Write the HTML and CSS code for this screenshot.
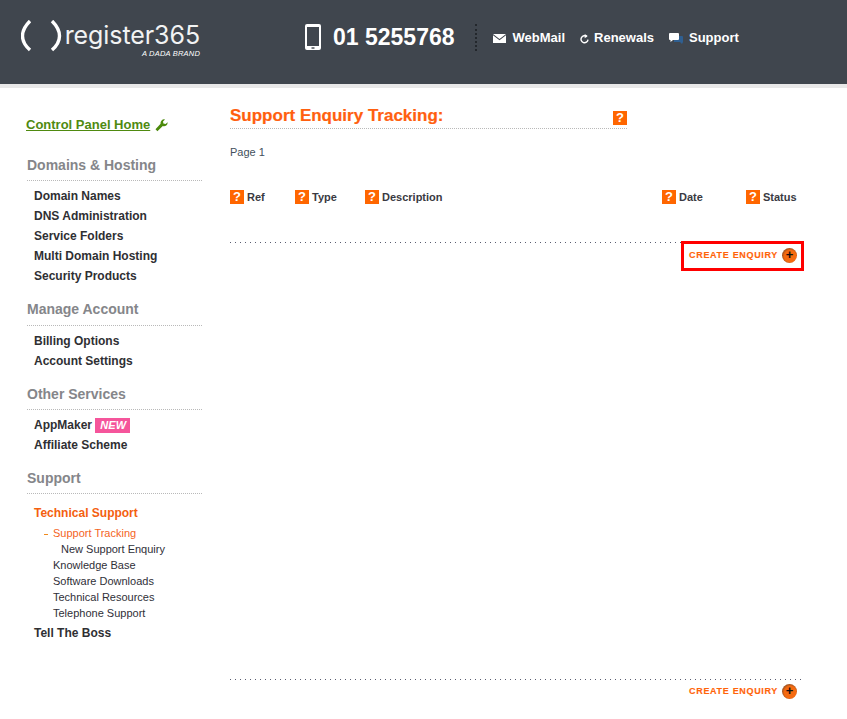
FILE: index.html
```html
<!DOCTYPE html>
<html lang="en">
<head>
<meta charset="utf-8">
<title>Support Enquiry Tracking</title>
<link rel="stylesheet" href="styles.css">
</head>
<body>
<header class="topbar">
  <a class="logo">
    <svg class="logo-brackets" width="42" height="32" viewBox="0 0 42 32"><path d="M9 1C-1 11-1 21 9 30M31 1C41 11 41 21 31 30" fill="none" stroke="#fff" stroke-width="3.400"/></svg>
    <span class="logo-text"><span class="logo-name">register365</span><span class="logo-sub">A DADA BRAND</span></span>
  </a>
  <div class="phone">
    <svg width="16" height="26" viewBox="0 0 16 26"><path fill-rule="evenodd" d="M2 0h12a2 2 0 0 1 2 2v22a2 2 0 0 1-2 2H2a2 2 0 0 1-2-2V2a2 2 0 0 1 2-2zM2 3v19h12V3z" fill="#fff"/><rect x="6.500" y="23.300" width="3" height="1.400" fill="#40464e"/></svg>
    <span class="phone-num">01 5255768</span>
  </div>
  <nav class="toplinks">
    <a class="toplink toplink-mail"><svg width="13" height="9" viewBox="0 0 13 9"><path d="M0 0h13L6.500 5z" fill="#fff"/><path d="M0 1.300V9h13V1.300L6.500 6.300z" fill="#fff"/></svg>WebMail</a>
    <a class="toplink toplink-renew"><svg width="9" height="10" viewBox="0 0 9 10"><path d="M6.800 2.600A3.500 3.500 0 1 0 8 5.600" fill="none" stroke="#fff" stroke-width="1.400"/><path d="M4.700 0v4.300l3-2.400z" fill="#fff"/></svg>Renewals</a>
    <a class="toplink toplink-support"><svg width="14" height="11" viewBox="0 0 14 11"><path d="M5 3h8a1 1 0 0 1 1 1v5l-1 2-2-2H5z" fill="#2f5f91"/><path d="M1 0h8a1 1 0 0 1 1 1v5a1 1 0 0 1-1 1H4L1.500 9V7H1a1 1 0 0 1-1-1V1a1 1 0 0 1 1-1z" fill="#fff"/></svg>Support</a>
  </nav>
</header>
<div class="strip"></div>
<div class="page">
  <aside class="side">
    <div class="home-row">
      <a class="home">Control Panel Home</a>
      <svg width="13" height="13" viewBox="0 0 13 13"><path d="M12.600 3.200 10.600 5 8.400 4.400 8 2.400 10 .5A3.600 3.600 0 0 0 5.600 4.800L.5 10.200 2.400 12.200 7.800 7A3.600 3.600 0 0 0 12.600 3.200z" fill="#4c8a0c"/></svg>
    </div>
    <h2 class="side-head">Domains &amp; Hosting</h2>
    <ul class="menu">
      <li>Domain Names</li>
      <li>DNS Administration</li>
      <li>Service Folders</li>
      <li>Multi Domain Hosting</li>
      <li>Security Products</li>
    </ul>
    <h2 class="side-head side-head-account">Manage Account</h2>
    <ul class="menu">
      <li>Billing Options</li>
      <li>Account Settings</li>
    </ul>
    <h2 class="side-head side-head-other">Other Services</h2>
    <ul class="menu">
      <li>AppMaker <span class="badge">NEW</span></li>
      <li>Affiliate Scheme</li>
    </ul>
    <h2 class="side-head side-head-support">Support</h2>
    <ul class="menu menu-support">
      <li class="active">Technical Support</li>
    </ul>
    <ul class="submenu">
      <li class="current">Support Tracking</li>
      <li class="deep">New Support Enquiry</li>
      <li>Knowledge Base</li>
      <li>Software Downloads</li>
      <li>Technical Resources</li>
      <li>Telephone Support</li>
    </ul>
    <ul class="menu menu-last">
      <li>Tell The Boss</li>
    </ul>
  </aside>
  <main class="main">
    <div class="title-row">
      <h1 class="title">Support Enquiry Tracking:</h1>
      <span class="help help-title">?</span>
    </div>
    <p class="pager">Page 1</p>
    <div class="cols">
      <span class="col col-ref"><span class="help">?</span>Ref</span>
      <span class="col col-type"><span class="help">?</span>Type</span>
      <span class="col col-desc"><span class="help">?</span>Description</span>
      <span class="col col-date"><span class="help">?</span>Date</span>
      <span class="col col-status"><span class="help">?</span>Status</span>
    </div>
    <div class="rule rule-top"></div>
    <div class="action-row action-row-top">
      <a class="create create-outlined">CREATE ENQUIRY<span class="plus">+</span></a>
    </div>
    <div class="rule rule-bottom"></div>
    <div class="action-row">
      <a class="create">CREATE ENQUIRY<span class="plus">+</span></a>
    </div>
  </main>
</div>
</body>
</html>
```
FILE: styles.css
```css
* { box-sizing: border-box; }
html, body { margin: 0; padding: 0; }
body { background: #fff; font-family: "Liberation Sans", Arial, sans-serif; color: #2f2f33; height: 719px; overflow: hidden; }
ul { list-style: none; margin: 0; padding: 0; }
h1, h2, p { margin: 0; }

.topbar { height: 84px; background: #40464e; display: flex; align-items: flex-start; color: #fff; }
.logo { display: flex; margin: 20px 0 0 21px; width: 179px; }
.logo-brackets { flex: none; margin-right: 2px; }
.logo-text { display: flex; flex-direction: column; align-items: flex-end; width: 135px; }
.logo-name { font-family: Inter, sans-serif; font-weight: 400; font-size: 25px; line-height: 30px; letter-spacing: -.08px; color: #f2f3f3; white-space: nowrap; }
.logo-sub { font-size: 7.500px; font-style: italic; font-weight: 400; line-height: 8px; margin-top: 0; letter-spacing: .2px; white-space: nowrap; }
.phone { display: flex; align-items: center; margin: 24px 0 0 105px; gap: 12px; }
.phone-num { font-size: 23px; font-weight: 700; line-height: 26px; white-space: nowrap; }
.toplinks { display: flex; margin: 24px 0 0 20px; height: 27px; padding-left: 16px; border-left: 2px dotted #23272c; gap: 15px; align-items: flex-start; }
.toplink { display: flex; align-items: center; font-size: 13px; font-weight: 700; line-height: 16px; margin-top: 6px; color: #fff; }
.toplink-mail svg { margin-right: 7px; margin-top: 1px; }
.toplink-renew svg { margin-right: 5px; margin-top: 1px; }
.toplink-support svg { margin-right: 6px; margin-top: 1px; }

.strip { height: 4px; background: #e8e8e8; }

.page { display: flex; align-items: flex-start; }
.side { width: 175px; margin: 28px 0 0 27px; flex: none; }
.home-row { display: flex; align-items: center; margin-left: -1px; height: 18px; gap: 5px; }
.home { font-size: 13px; font-weight: 700; color: #4f8a10; text-decoration: underline; line-height: 16px; }
.side-head { font-size: 14px; font-weight: 700; color: #85868a; line-height: 18px; padding-bottom: 6px; border-bottom: 1px dotted #b9b9b9; }
.home-row + .side-head { margin-top: 22px; }
.menu { margin-top: 5px; }
.menu li { font-size: 12px; font-weight: 700; line-height: 20px; padding-left: 7px; height: 20px; color: #2f2f33; }
.menu + .side-head-account { margin-top: 14px; padding-bottom: 7px; }
.menu + .side-head-other { margin-top: 14px; }
.menu + .side-head-support { margin-top: 14px; }
.menu-support { margin-top: 9px; }
.menu li.active { color: #f4600f; }
.badge { display: inline-block; background: #f5559b; color: #fff; font-size: 11px; font-style: italic; font-weight: 700; line-height: 15px; height: 15px; padding: 0 4px 0 5px; margin-left: 0; vertical-align: 0; }
.submenu { margin-top: 2px; }
.submenu li { font-size: 11px; line-height: 16px; height: 16px; padding-left: 26px; color: #2f2f38; }
.submenu li.current { color: #f4641e; position: relative; }
.submenu li.current::before { content: ""; position: absolute; left: 17px; top: 9px; width: 4px; height: 1px; background: #f08a1c; }
.submenu li.deep { padding-left: 34px; }
.menu-last { margin-top: 2px; }

.main { margin: 16px 0 0 28px; width: 574px; flex: none; }
.title-row { position: relative; height: 25px; border-bottom: 1px dotted #b9b9b9; width: 397px; }
.title { font-size: 17px; font-weight: 700; color: #ff5f0f; line-height: 24px; white-space: nowrap; -webkit-text-stroke: .2px #ff5f0f; }
.help { display: inline-block; width: 14px; height: 14px; background: #ff6600; color: #fff; font-size: 13px; font-weight: 700; line-height: 14px; text-align: center; flex: none; }
.help-title { position: absolute; left: 383px; top: 7px; }
.pager { font-size: 11px; line-height: 14px; color: #42505c; margin-top: 16px; }
.cols { position: relative; height: 14px; margin-top: 31px; }
.col { position: absolute; top: 0; display: flex; align-items: center; gap: 3px; font-size: 11px; font-weight: 700; line-height: 14px; color: #3a3a42; white-space: nowrap; }
.col-ref { left: 0; }
.col-type { left: 65px; }
.col-desc { left: 135px; }
.col-date { left: 432px; }
.col-status { left: 516px; }
.rule { height: 1px; width: 574px; background: repeating-linear-gradient(to right, #5a5d70 0, #5a5d70 1px, transparent 1px, transparent 5px); }
.rule-top { margin-top: 38px; }
.rule-bottom { margin-top: 408px; }
.action-row { display: flex; justify-content: flex-end; width: 574px; }
.action-row-top { margin-top: -2px; }
.create { display: flex; align-items: center; font-size: 9px; font-weight: 700; letter-spacing: .67px; color: #ff640a; height: 16px; margin: 3px 7px 0 0; gap: 4px; white-space: nowrap; -webkit-text-stroke: .15px #ff640a; }
.create-outlined { height: 30px; margin: 0; padding: 0 4px 2px 5px; border: 3px solid #f00; background: #fff; }
.plus { display: block; width: 15px; height: 15px; border-radius: 50%; background: radial-gradient(circle at 55% 55%, #f56a10 50%, #a8551f 68%, #4e4a48 100%); color: #111; font-size: 13px; font-weight: 700; line-height: 14px; text-align: center; letter-spacing: 0; -webkit-text-stroke: 0; }
```
